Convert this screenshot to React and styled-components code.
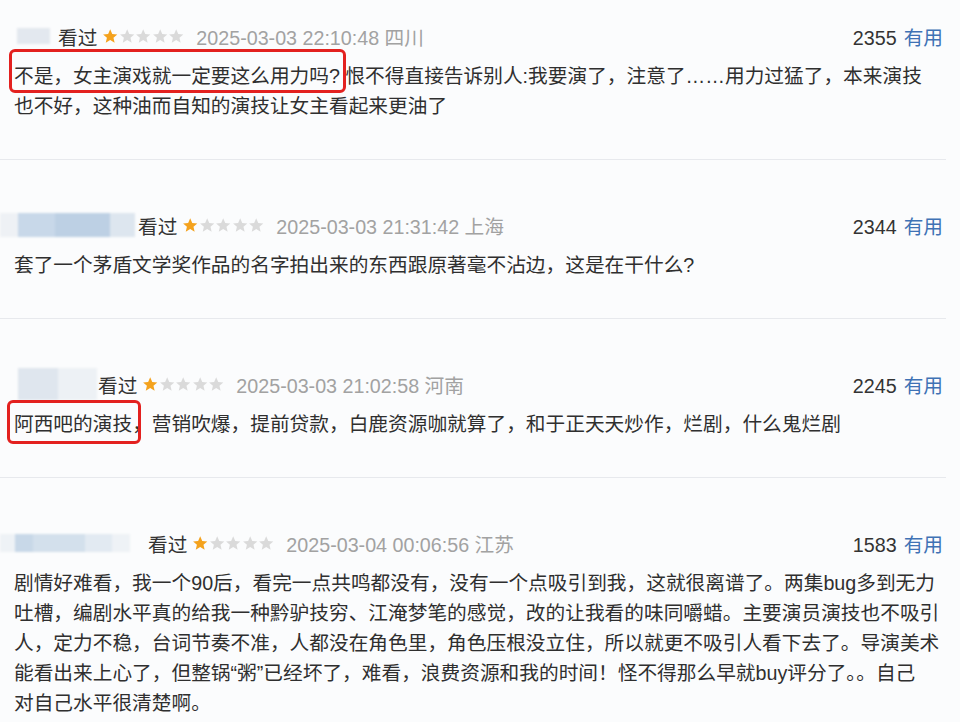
import React from "react";
import styled, { createGlobalStyle } from "styled-components";

const GlobalStyle = createGlobalStyle`
  html, body {
    margin: 0;
    padding: 0;
    background: #fbfcfd;
  }
  body {
    font-family: "Liberation Sans", "Noto Sans CJK SC", sans-serif;
    -webkit-font-smoothing: antialiased;
  }
`;

const Page = styled.div`
  width: 960px;
  height: 722px;
  overflow: hidden;
  background: #fbfcfd;
`;

const List = styled.ul`
  list-style: none;
  margin: 0;
  padding: 0;
  width: 946px;
`;

const Item = styled.li`
  padding: ${(p) => (p.$first ? 21 : 50)}px 3px 38px 14px;
  border-bottom: 1px solid #e7e9ed;
`;

const Header = styled.div`
  display: flex;
  align-items: center;
  height: 30px;
  margin-left: -14px;
  font-size: 19.7px;
  white-space: nowrap;
`;

const Mask = styled.span`
  display: flex;
  flex-shrink: 0;
  height: ${(p) => p.$h}px;
  margin-left: ${(p) => p.$lead}px;
  margin-right: ${(p) => p.$gap}px;
  filter: blur(1.2px);
`;

const MaskBlock = styled.span`
  display: block;
  height: 100%;
  width: ${(p) => p.$w}px;
  background: ${(p) => p.$c};
`;

const Watched = styled.span`
  color: #333;
`;

const Stars = styled.span`
  display: inline-flex;
  margin: 0 12px 0 5px;
`;

const DateText = styled.span`
  color: #a2a2a2;
`;

const Votes = styled.span`
  margin-left: auto;
  color: #333;
`;

const Useful = styled.span`
  color: #3f72b5;
  margin-left: 7px;
`;

const Body = styled.div`
  margin-top: 10px;
  font-size: 19.7px;
  line-height: 30px;
  color: #2f2f2f;
`;

const Line = styled.div`
  white-space: nowrap;
`;

const Marked = styled.span`
  position: relative;
  &::after {
    content: "";
    position: absolute;
    top: ${(p) => p.$t}px;
    bottom: ${(p) => p.$b}px;
    left: ${(p) => p.$l}px;
    right: ${(p) => p.$r}px;
    border: 3px solid #e3211f;
    border-radius: 6px;
    pointer-events: none;
  }
`;

const StarIcon = ({ on }) => (
  <svg width="16.4" height="16.4" viewBox="0 0 24 24">
    <path
      d="M12 1.8l3 6.9 7.4.7-5.6 4.9 1.7 7.3L12 17.7l-6.5 3.9 1.7-7.3-5.6-4.9 7.4-.7z"
      fill={on ? "#f4a21d" : "#dadada"}
    />
  </svg>
);

const reviews = [
  {
    mask: { lead: 17, gap: 8, h: 16, blocks: [[33, "#e3e8ef"]] },
    date: "2025-03-03 22:10:48 四川",
    votes: 2355,
    lines: [
      [
        { mark: { t: -16, b: -6, l: -5, r: -6 }, text: "不是，女主演戏就一定要这么用力吗?" },
        " 恨不得直接告诉别人:我要演了，注意了……用力过猛了，本来演技",
      ],
      ["也不好，这种油而自知的演技让女主看起来更油了"],
    ],
  },
  {
    mask: {
      lead: 0,
      gap: 3,
      h: 24,
      blocks: [
        [18, "#eef1f5"],
        [37, "#c8d8e9"],
        [55, "#bdd0e4"],
        [25, "#dde6ef"],
      ],
    },
    date: "2025-03-03 21:31:42 上海",
    votes: 2344,
    lines: [["套了一个茅盾文学奖作品的名字拍出来的东西跟原著毫不沾边，这是在干什么?"]],
  },
  {
    mask: {
      lead: 18,
      gap: 1,
      h: 32,
      blocks: [
        [40, "#dfe6ee"],
        [39, "#edf1f5"],
      ],
    },
    date: "2025-03-03 21:02:58 河南",
    votes: 2245,
    lines: [
      [
        { mark: { t: -13, b: -9, l: -7, r: -9 }, text: "阿西吧的演技" },
        "，营销吹爆，提前贷款，白鹿资源咖就算了，和于正天天炒作，烂剧，什么鬼烂剧",
      ],
    ],
  },
  {
    mask: {
      lead: 0,
      gap: 18,
      h: 18,
      blocks: [
        [15, "#eef2f6"],
        [18, "#c8d8e8"],
        [52, "#d3e0ec"],
        [27, "#e2eaf2"],
        [18, "#eef2f6"],
      ],
    },
    date: "2025-03-04 00:06:56 江苏",
    votes: 1583,
    lines: [
      ["剧情好难看，我一个90后，看完一点共鸣都没有，没有一个点吸引到我，这就很离谱了。两集bug多到无力"],
      ["吐槽，编剧水平真的给我一种黔驴技穷、江淹梦笔的感觉，改的让我看的味同嚼蜡。主要演员演技也不吸引"],
      ["人，定力不稳，台词节奏不准，人都没在角色里，角色压根没立住，所以就更不吸引人看下去了。导演美术"],
      ["能看出来上心了，但整锅“粥”已经坏了，难看，浪费资源和我的时间！怪不得那么早就buy评分了。。自己"],
      ["对自己水平很清楚啊。"],
    ],
  },
];

const Review = ({ review, first }) => (
  <Item $first={first}>
    <Header>
      <Mask $lead={review.mask.lead} $gap={review.mask.gap} $h={review.mask.h}>
        {review.mask.blocks.map(([w, c], i) => (
          <MaskBlock key={i} $w={w} $c={c} />
        ))}
      </Mask>
      <Watched>看过</Watched>
      <Stars>
        {[0, 1, 2, 3, 4].map((i) => (
          <StarIcon key={i} on={i === 0} />
        ))}
      </Stars>
      <DateText>{review.date}</DateText>
      <Votes>
        {review.votes}
        <Useful>有用</Useful>
      </Votes>
    </Header>
    <Body>
      {review.lines.map((parts, i) => (
        <Line key={i}>
          {parts.map((p, j) =>
            typeof p === "string" ? (
              <React.Fragment key={j}>{p}</React.Fragment>
            ) : (
              <Marked key={j} $t={p.mark.t} $b={p.mark.b} $l={p.mark.l} $r={p.mark.r}>
                {p.text}
              </Marked>
            )
          )}
        </Line>
      ))}
    </Body>
  </Item>
);

export default function App() {
  return (
    <Page>
      <GlobalStyle />
      <List>
        {reviews.map((r, i) => (
          <Review key={i} review={r} first={i === 0} />
        ))}
      </List>
    </Page>
  );
}
